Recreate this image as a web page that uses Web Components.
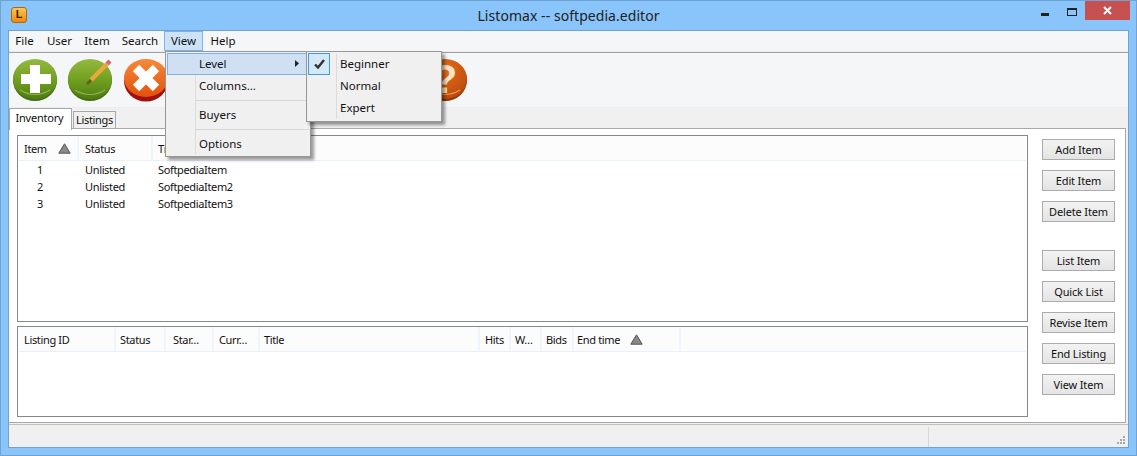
<!DOCTYPE html>
<html><head><meta charset="utf-8"><style>
html,body{margin:0;padding:0;overflow:hidden}
body{width:1137px;height:456px;font:11.5px "Noto Sans","Open Sans",sans-serif;color:#111}
</style></head><body>
<app-window></app-window>
<template id="win"><style>
:host{display:flex;flex-direction:column;width:1137px;height:456px;box-sizing:border-box;background:#89c4fa;border:1px solid #6fa3d4;position:relative;font-family:"Noto Sans","Open Sans",sans-serif;font-size:11.5px}
.title{height:29px;display:flex;align-items:center;flex:none;position:relative}
.ttl{position:absolute;left:0;right:0;top:6px;text-align:center;font-size:14px;line-height:18px;color:#222;letter-spacing:.05px}
.logo{margin:-2px 0 0 10px;width:16px;height:16px;border-radius:3px;background:linear-gradient(#ffc552,#ef8a0c);border:1px solid #a86a10;box-sizing:border-box;font:bold 11px/13px "Liberation Sans",sans-serif;text-align:center;color:#3a2200}
.ctl{margin-left:auto;display:flex;align-items:flex-start;height:29px;margin-right:6px}
.ctl svg{display:block}
.close{width:45px;height:19px;background:#c75050;display:flex;align-items:center;justify-content:center;margin-left:8px}
.min{margin-top:12px}.max{margin-top:7px;margin-left:18px}
.client{margin:0 7px 7px;flex:1;display:flex;flex-direction:column;background:#f0f0f0;border:1px solid #6fa3d4;min-height:0}
.mbar{height:20px;background:#f5f6f7;display:flex;flex:none;border-bottom:1px solid #ececec}
.rule{height:1px;background:#a0a0a0;flex:none}
.tools{height:55px;flex:none;background:#f5f6f7;display:flex;gap:9px;padding:4px 0 0 3px;box-sizing:border-box;border-bottom:1px solid #ededed}
.tools svg{display:block;flex:none}
.tabs{display:flex;flex:none;height:20px;align-items:flex-end;position:relative;z-index:1}
.panel{height:295px;flex:none;box-sizing:border-box;background:#fff;border:1px solid #a8a8a8;border-left:0;margin-right:2px;padding:6px 0 6px 8px;display:flex;gap:14px}
.lists{width:1011px;display:flex;flex-direction:column;gap:4px}
.btns{display:flex;flex-direction:column;width:74px;padding-top:4px}
.status{flex:1;margin-top:1px;border-top:1px solid #c0c0c0;display:flex;justify-content:flex-end;position:relative}
.sep{width:1px;height:20px;background:#d8d8d8;margin:2px 199px 0 0}
.grip{position:absolute;right:2px;bottom:2px}
</style>
<div class="title"><div class="logo">L</div><div class="ttl">Listomax -- softpedia.editor</div>
<div class="ctl">
<svg class="min" width="8" height="3"><rect width="8" height="3" fill="#222"/></svg>
<svg class="max" width="10" height="8"><rect x=".5" y="1" width="9" height="6.5" fill="none" stroke="#222"/><rect width="10" height="2" fill="#222"/></svg>
<div class="close"><svg width="9" height="9" viewBox="0 0 9 9"><path d="M1 1l7 7M8 1l-7 7" stroke="#fff" stroke-width="2"/></svg></div>
</div></div>
<div class="client">
<div class="mbar"><menu-item style="width:32px;padding-right:1px">File</menu-item><menu-item style="width:37px">User</menu-item><menu-item style="width:38px">Item</menu-item><menu-item style="width:48px">Search</menu-item><menu-item active style="width:39px">View</menu-item><menu-item style="width:40px">Help</menu-item></div>
<div class="rule"></div>
<div class="tools">
<svg width="46" height="46" viewBox="0 0 46 46"><defs>
<linearGradient id="g" x1="0" y1="0" x2="0" y2="1"><stop offset="0" stop-color="#94b93f"/><stop offset=".55" stop-color="#6f9e1f"/><stop offset="1" stop-color="#4f7c14"/></linearGradient>
<linearGradient id="r" x1="0" y1="0" x2="0" y2="1"><stop offset="0" stop-color="#f58a3a"/><stop offset="1" stop-color="#e2500c"/></linearGradient>
<radialGradient id="q" cx=".4" cy=".3" r=".8"><stop offset="0" stop-color="#e8721c"/><stop offset="1" stop-color="#b8460a"/></radialGradient></defs>
<ellipse cx="23" cy="23.5" rx="22" ry="20.5" fill="#44700f"/><ellipse cx="23" cy="22" rx="22" ry="20" fill="url(#g)"/><path d="M8 33q15 9 30 0" fill="none" stroke="#a9c868" stroke-width="1.2" opacity=".7"/><path d="M18 8h10v9h11v10H28v9H18v-9H9V17h9z" fill="#fff"/></svg>
<svg width="46" height="46" viewBox="0 0 46 46"><ellipse cx="23" cy="23.5" rx="22" ry="20.5" fill="#44700f"/><ellipse cx="23" cy="22" rx="22" ry="20" fill="url(#g)"/><path d="M8 33q15 9 30 0" fill="none" stroke="#a9c868" stroke-width="1.2" opacity=".7"/><path d="M24 23L40 7" stroke="#e8a83c" stroke-width="4.5"/><path d="M24 23l-4 4" stroke="#6a5a20" stroke-width="2.5"/><path d="M40 7l3-3" stroke="#d56a6a" stroke-width="4.5"/></svg>
<svg width="46" height="46" viewBox="0 0 46 46" style="margin-left:1px"><ellipse cx="23" cy="24" rx="22" ry="20.5" fill="#a10f0f"/><ellipse cx="23" cy="21" rx="22" ry="19" fill="url(#r)"/><path d="M13 11L33 31M33 11L13 31" stroke="#fff" stroke-width="9"/></svg>
<svg width="46" height="46" viewBox="0 0 46 46" style="margin-left:244px"><ellipse cx="23" cy="23.5" rx="22" ry="20.5" fill="#8f3306"/><ellipse cx="23" cy="22" rx="22" ry="20" fill="url(#q)"/><path d="M8 33q15 9 30 0" fill="none" stroke="#ee9a62" stroke-width="1.2"/><text x="23" y="36" text-anchor="middle" font-family="Liberation Sans" font-weight="bold" font-size="40" fill="#fbe3c8">?</text></svg>
</div>
<div class="tabs"><tab-item selected>Inventory</tab-item><tab-item>Listings</tab-item></div>
<div class="panel">
<div class="lists">
<list-view h="187" data-k="a"></list-view>
<list-view h="91" data-k="b"></list-view>
</div>
<div class="btns">
<push-btn>Add Item</push-btn><push-btn>Edit Item</push-btn><push-btn>Delete Item</push-btn>
<div style="height:18px"></div>
<push-btn>List Item</push-btn><push-btn>Quick List</push-btn><push-btn>Revise Item</push-btn><push-btn>End Listing</push-btn><push-btn>View Item</push-btn>
</div>
</div>
<div class="status"><div class="sep"></div><svg class="grip" width="9" height="9" fill="#a8a8a8"><rect x="6" y="0" width="2" height="2"/><rect x="6" y="3" width="2" height="2"/><rect x="6" y="6" width="2" height="2"/><rect x="3" y="3" width="2" height="2"/><rect x="3" y="6" width="2" height="2"/><rect x="0" y="6" width="2" height="2"/></svg></div>
</div>
<pop-menu style="left:164px;top:50px;width:146px;height:106px">
<menu-row hot arrow>Level</menu-row>
<menu-row>Columns...</menu-row>
<menu-div></menu-div>
<menu-row>Buyers</menu-row>
<menu-div></menu-div>
<menu-row>Options</menu-row>
</pop-menu>
<pop-menu style="left:305px;top:50px;width:136px;height:71px">
<menu-row checked>Beginner</menu-row>
<menu-row>Normal</menu-row>
<menu-row>Expert</menu-row>
</pop-menu>
</template>
<script>
const sh=(el,html)=>{el.attachShadow({mode:'open'}).innerHTML=html};
class AppWindow extends HTMLElement{connectedCallback(){this.attachShadow({mode:'open'}).appendChild(document.getElementById('win').content.cloneNode(true))}}
class MenuItem extends HTMLElement{constructor(){super();sh(this,`<style>:host{display:flex;box-sizing:border-box;height:20px;align-items:center;justify-content:center;color:#111;padding-bottom:2px}
:host([active]){background:#cde2f7;border:1px solid #7db3e6;padding-bottom:1px}</style><slot></slot>`)}}
class TabItem extends HTMLElement{constructor(){super();sh(this,`<style>:host{display:flex;box-sizing:border-box;height:18px;align-items:center;justify-content:center;background:#f0f0f0;border:1px solid #a8a8a8;width:43px;margin-left:1px;margin-bottom:-1px;font-size:11px;letter-spacing:-.3px;padding-bottom:2px}
:host([selected]){height:22px;width:63px;margin-left:0;background:#fff;border-bottom:0;margin-bottom:-2px;padding:0 2px 5px 0;letter-spacing:-.2px}</style><slot></slot>`)}}
class PushBtn extends HTMLElement{constructor(){super();sh(this,`<style>:host{display:flex;box-sizing:border-box;width:73px;height:21px;margin-bottom:10px;align-items:center;justify-content:center;background:linear-gradient(#f3f3f3,#e4e4e4);border:1px solid #acacac;font-size:11px;letter-spacing:-.15px}</style><slot></slot>`)}}
class PopMenu extends HTMLElement{constructor(){super();sh(this,`<style>:host{position:absolute;display:block;box-sizing:border-box;background:#f0f0f0;border:1px solid #979797;box-shadow:3px 3px 3px rgba(0,0,0,.4);padding:1px;z-index:5}
.rail{position:absolute;left:29px;top:2px;bottom:2px;width:1px;background:#dcdcdc}</style><div class="rail"></div><slot></slot>`)}}
class MenuRow extends HTMLElement{constructor(){super();sh(this,`<style>:host{display:flex;position:relative;box-sizing:border-box;height:22px;align-items:center;padding:0 0 2px 31px;border:1px solid transparent;color:#111;font-size:11.5px}
:host([hot]){background:#cfe0f3;border-color:#7db3e6}
.a{display:none;position:absolute;right:9px;top:6px}:host([arrow]) .a{display:block}
.c{display:none;position:absolute;left:-1px;top:-1px;width:22px;height:22px;box-sizing:border-box;border:1px solid #3c9ed8;background:#d5e8f8;align-items:center;justify-content:center}:host([checked]) .c{display:flex}</style>
<span class="c"><svg width="11" height="10" viewBox="0 0 11 10"><path d="M1 5.5l3 3 6-7.5" fill="none" stroke="#333" stroke-width="2.4"/></svg></span><slot></slot><svg class="a" width="4" height="7"><path d="M0 0l4 3.5-4 3.5z" fill="#222"/></svg>`)}}
class MenuDiv extends HTMLElement{constructor(){super();sh(this,`<style>:host{display:block;height:1px;margin:3px 0 3px 29px;background:#d7d7d7}</style>`)}}
const cols={a:[[60,'Item',5,6],[74,'Status',6],[0,'Title',5]],
 b:[[97,'Listing ID',5],[50,'Status',4],[48,'Star…',7],[46,'Curr…',5],[220,'Title',4],[31,'Hits',5],[31,'W…',4],[32,'Bids',4],[107,'End time',3,36]]};
const rows=[['1','Unlisted','SoftpediaItem'],['2','Unlisted','SoftpediaItem2'],['3','Unlisted','SoftpediaItem3']];
class ListView extends HTMLElement{connectedCallback(){const k=this.dataset.k,h=this.getAttribute('h');
 const hd=cols[k].map(([w,t,p,s])=>`<div class="th" style="${w?`width:${w}px`:'flex:1;border:0'};padding-left:${p}px">${t}${s?`<svg width="13" height="11" style="position:absolute;right:${s}px;top:7px"><path d="M6.5 .8l5.7 9.4H.8z" fill="#8a8a8a" stroke="#555"/></svg>`:''}</div>`).join('');
 const body=k=='a'?rows.map(r=>`<div class="tr"><div class="td n">${r[0]}</div><div class="td" style="width:73px">${r[1]}</div><div class="td">${r[2]}</div></div>`).join(''):'';
 sh(this,`<style>:host{display:block;box-sizing:border-box;height:${h}px;border:1px solid #828790;background:#fff;flex:none;font-size:11px;letter-spacing:-.35px}
.hd{display:flex;height:24px;background:#fcfcfd;border-bottom:1px solid #e8f0fb;margin:0 1px;overflow:hidden}
.th{box-sizing:border-box;position:relative;border-right:2px solid #f0f4fb;line-height:25px;white-space:nowrap;flex:none;color:#111}
.tr{display:flex;height:17px;line-height:17px}.n{width:67px;box-sizing:border-box;padding-left:19px;flex:none}.td{flex:none;color:#111}
</style><div class="hd">${hd}</div><div class="bd">${body}</div>`)}}
for(const [n,c] of Object.entries({'app-window':AppWindow,'menu-item':MenuItem,'tab-item':TabItem,'push-btn':PushBtn,'pop-menu':PopMenu,'menu-row':MenuRow,'menu-div':MenuDiv,'list-view':ListView}))customElements.define(n,c);
</script>
</body></html>
